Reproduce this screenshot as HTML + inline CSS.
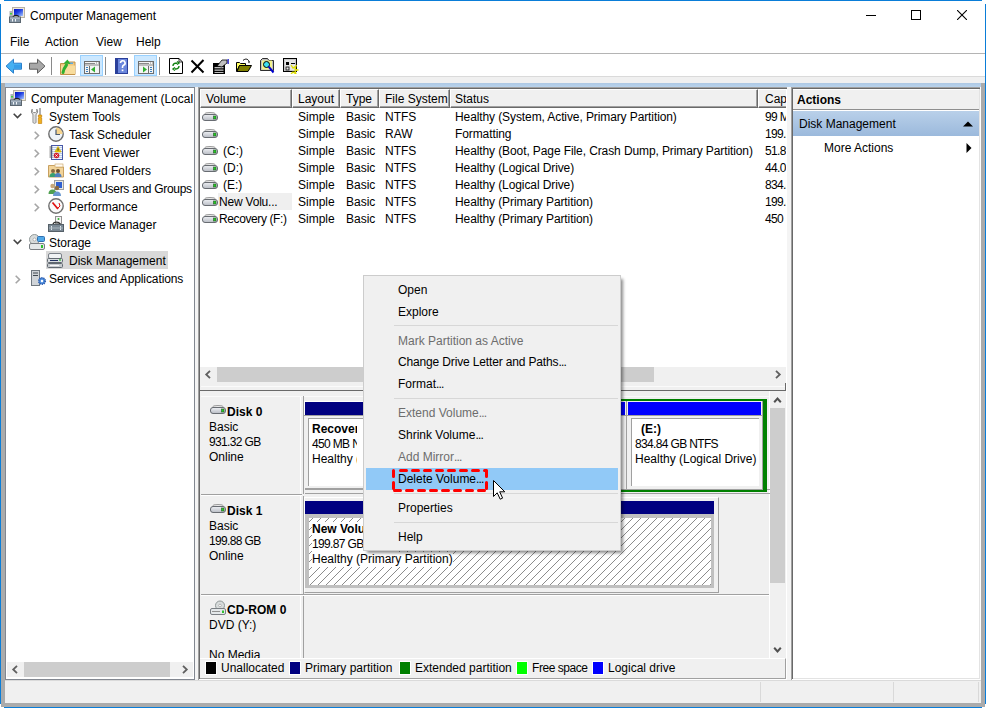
<!DOCTYPE html>
<html><head><meta charset="utf-8">
<style>
*{box-sizing:border-box;margin:0;padding:0}
html,body{width:986px;height:708px;overflow:hidden;background:#fff}
body{position:relative;font-family:"Liberation Sans",sans-serif;font-size:12px;color:#000}
.a{position:absolute}
.t{position:absolute;white-space:nowrap;line-height:15px}
.b{font-weight:bold}
.g{color:#6d6d6d}
.el{letter-spacing:-0.8px}
.dg{letter-spacing:-0.65px}
.hd{position:absolute;top:0;height:19px;background:#f0f0f0;border-top:1px solid #fff;border-left:1px solid #fff;box-shadow:inset -1px -1px 0 #a0a0a0;border-right:1px solid #696969;border-bottom:1px solid #696969}
.col{position:absolute;top:1px;white-space:nowrap;line-height:17px}
.dr{position:absolute;width:16px;height:10px}
.lg{position:absolute;top:661px;width:12px;height:14px;border:1px solid #fff}

</style></head><body>
<svg width="0" height="0" style="position:absolute"><defs><linearGradient id="dg" x1="0" y1="0" x2="0" y2="1"><stop offset="0" stop-color="#eef0f4"/><stop offset="1" stop-color="#b8bcc4"/></linearGradient></defs></svg>
<!-- window blue border -->
<div class="a" style="left:4px;top:0;width:978px;height:1px;background:#0a7dd8"></div>
<div class="a" style="left:0;top:4px;width:1px;height:700px;background:#0a7dd8"></div>
<div class="a" style="left:985px;top:4px;width:1px;height:700px;background:#0a7dd8"></div>
<div class="a" style="left:4px;top:707px;width:978px;height:1px;background:#0a7dd8"></div>

<!-- title icon -->
<svg class="a" style="left:9px;top:7px" width="16" height="16" viewBox="0 0 16 16"><defs><linearGradient id="scr" x1="0" y1="0" x2="1" y2="1"><stop offset="0" stop-color="#0010c0"/><stop offset=".45" stop-color="#2040e0"/><stop offset="1" stop-color="#a8c8ff"/></linearGradient></defs><rect x="3.5" y=".5" width="12" height="10" fill="#ece8dc" stroke="#b8b2a4"/><rect x="5" y="2" width="9" height="7" fill="url(#scr)"/><rect x=".5" y="4" width="3" height="6" fill="#b0b4b8"/><rect x="1" y="6" width="2" height="1.5" fill="#40d040"/><path d="M4 10c1-2.2 5-2.2 6 0" stroke="#202020" stroke-width="1.4" fill="none"/><rect x=".5" y="10" width="11" height="5.5" fill="#8494a4" stroke="#5a6670"/><rect x="1" y="10.5" width="10" height="1.2" fill="#b8c4d0"/><rect x="3" y="12" width="1" height="2.5" fill="#f0f4f8"/><rect x="6" y="12" width="1" height="2.5" fill="#f0f4f8"/></svg>
<!-- window buttons -->
<div class="a" style="left:866px;top:15px;width:10px;height:1px;background:#000"></div>
<div class="a" style="left:911px;top:10px;width:10px;height:10px;border:1px solid #000"></div>
<svg class="a" style="left:957px;top:10px" width="10" height="10" viewBox="0 0 10 10"><path d="M0 0L10 10M10 0L0 10" stroke="#000" stroke-width="1.1"/></svg>
<!-- title -->
<div class="t" style="left:30px;top:9px">Computer Management</div>
<!-- menu -->
<div class="t" style="left:10px;top:35px">File</div>
<div class="t" style="left:45px;top:35px">Action</div>
<div class="t" style="left:96px;top:35px">View</div>
<div class="t" style="left:136px;top:35px">Help</div>
<div class="a" style="left:1px;top:53px;width:984px;height:1px;background:#b4b4b4"></div>
<div class="a" style="left:1px;top:76px;width:984px;height:1px;background:#dadada"></div>
<div class="a" style="left:1px;top:77px;width:984px;height:6px;background:#f0f0f0"></div>

<!-- toolbar -->
<svg class="a" style="left:5px;top:58px" width="18" height="17" viewBox="0 0 18 17"><path d="M1 8.2L8.5 1.2V5.2H16.5V11.2H8.5V15.2z" fill="#45b0f2" stroke="#2a7fcc" stroke-width="1" stroke-linejoin="round"/><path d="M9 7h7v3H9z" fill="#2a8ae0" opacity=".5"/></svg>
<svg class="a" style="left:28px;top:58px" width="18" height="17" viewBox="0 0 18 17"><path d="M17 8.2L9.5 1.2V5.2H1.5V11.2H9.5V15.2z" fill="#a8a8a8" stroke="#5e5e5e" stroke-width="1" stroke-linejoin="round"/></svg>
<div class="a" style="left:51px;top:57px;width:1px;height:18px;background:#8a8a8a"></div>
<svg class="a" style="left:60px;top:59px" width="16" height="16" viewBox="0 0 16 16"><path d="M.5 4.5h6l1.5-1.5h7v12.5H.5z" fill="#efc77e" stroke="#c49248"/><rect x="1" y="6.5" width="14" height="8.5" fill="#f8dc9c"/><rect x="9" y="3.5" width="4" height="1.5" fill="#5aa8e8"/><path d="M3 13.5C3.5 10 5 8 6.5 6" stroke="#2fb02f" stroke-width="3" fill="none" stroke-linecap="round"/><path d="M3.5 4.5L7.5 .5 10.5 5z" fill="#2fb02f"/></svg>
<div class="a" style="left:80px;top:55px;width:23px;height:21px;background:#cce8ff;border:1px solid #99d1ff"></div>
<svg class="a" style="left:84px;top:61px" width="16" height="13" viewBox="0 0 16 13"><rect x=".5" y=".5" width="15" height="12" fill="#f4f4f4" stroke="#6e6e6e"/><path d="M1 2.5h10M1 4h14" stroke="#8a8a8a"/><rect x="12" y="1.5" width="1" height="1" fill="#8a8a8a"/><rect x="14" y="1.5" width="1" height="1" fill="#8a8a8a"/><path d="M5.5 5v7" stroke="#6e6e6e"/><path d="M2 6.5h2M2 8.5h2M2 10.5h2" stroke="#3a80c0"/><path d="M11 5.5v6l-4-3z" fill="#30b030"/></svg>
<div class="a" style="left:105px;top:57px;width:1px;height:18px;background:#8a8a8a"></div>
<svg class="a" style="left:115px;top:58px" width="13" height="16" viewBox="0 0 13 16"><rect x="0" y="0" width="13" height="16" fill="#2a3f9a"/><rect x="3" y="1" width="9" height="14" fill="#6a86dc"/><path d="M5.5 5a2.3 2.3 0 1 1 3 2.2c-.8.4-1 1-1 2v.8" stroke="#fff" stroke-width="1.6" fill="none"/><rect x="6.7" y="11.5" width="1.7" height="1.7" fill="#fff"/></svg>
<div class="a" style="left:134px;top:55px;width:23px;height:21px;background:#cce8ff;border:1px solid #99d1ff"></div>
<svg class="a" style="left:138px;top:61px" width="16" height="13" viewBox="0 0 16 13"><rect x=".5" y=".5" width="15" height="12" fill="#f4f4f4" stroke="#6e6e6e"/><path d="M1 2.5h10M1 4h14" stroke="#8a8a8a"/><rect x="12" y="1.5" width="1" height="1" fill="#8a8a8a"/><rect x="14" y="1.5" width="1" height="1" fill="#8a8a8a"/><path d="M10.5 5v7" stroke="#6e6e6e"/><path d="M12 6.5h2M12 8.5h2M12 10.5h2" stroke="#3a80c0"/><path d="M5 5.5v6l4-3z" fill="#30b030"/></svg>
<div class="a" style="left:159px;top:57px;width:1px;height:18px;background:#8a8a8a"></div>
<svg class="a" style="left:169px;top:58px" width="14" height="16" viewBox="0 0 14 16"><path d="M.5.5h9.5l3.5 3.5v11.5H.5z" fill="#fff" stroke="#000"/><path d="M10 .5v3.5h3.5" fill="none" stroke="#000" stroke-width=".8"/><path d="M4 8c0-2 1-3 4-3M8 3.5l2 1.5-2 1.5M10 8c0 2-1 3-4 3M6 9.5l-2 1.5 2 1.5" stroke="#108010" stroke-width="1.4" fill="none"/></svg>
<svg class="a" style="left:190px;top:59px" width="15" height="15" viewBox="0 0 15 15"><path d="M1.5 1.5L13.5 13.5M13.5 1L1.5 13.5" stroke="#000" stroke-width="2"/></svg>
<svg class="a" style="left:213px;top:59px" width="16" height="15" viewBox="0 0 16 15"><rect x="0" y="4" width="12" height="11" fill="#000"/><rect x="1.5" y="8" width="9" height="1.3" fill="#c0c0c0"/><rect x="1.5" y="10.5" width="9" height="1.3" fill="#c0c0c0"/><rect x="1.5" y="13" width="9" height="1" fill="#c0c0c0"/><path d="M4 7l5-6h5v3l-5 4z" fill="#c0c0c0" stroke="#000" stroke-width=".8"/><rect x="14.5" y="0" width="1.2" height="5" fill="#0000c0"/></svg>
<svg class="a" style="left:236px;top:58px" width="17" height="15" viewBox="0 0 17 15"><path d="M.5 4.5h3l1 1h5v2h-6l-3 6z" fill="#ffff60" stroke="#000"/><path d="M3.5 7.5h12l-3.5 6h-11z" fill="#808000" stroke="#000"/><path d="M7 2.5c2-2 5-2 6 1" stroke="#000" fill="none"/><path d="M12 3.5h2l-1 2z" fill="#000"/></svg>
<svg class="a" style="left:260px;top:58px" width="15" height="16" viewBox="0 0 15 16"><path d="M.5 2.5l2-2h5l1.5 2h4.5v10h-13z" fill="#c0c0c0" stroke="#000" stroke-width=".8"/><rect x="2" y="2.5" width="10" height="9" fill="#ffff80" opacity=".8"/><circle cx="6.5" cy="6.5" r="3" fill="#40e0f0" stroke="#000"/><path d="M8.7 8.7L13.5 14.5" stroke="#0000d0" stroke-width="2"/></svg>
<svg class="a" style="left:283px;top:58px" width="16" height="16" viewBox="0 0 16 16"><rect x=".5" y=".5" width="13" height="13" fill="#c8c8c8" stroke="#000"/><rect x="2" y="2" width="10" height="10" fill="#fff" opacity=".5"/><rect x="3" y="4" width="3" height="3" fill="#000"/><rect x="8" y="5" width="4" height="1" fill="#000"/><rect x="3" y="9" width="3" height="3" fill="none" stroke="#000" stroke-width=".8"/><path d="M8 7l2 3 3-2-1 3 3 1-3 1 1 3-3-2-2 2" stroke="#e0e000" stroke-width="1.3" fill="none"/></svg>
<!-- frame -->
<div class="a" style="left:1px;top:83px;width:4px;height:624px;background:#ababab"></div>
<div class="a" style="left:981px;top:83px;width:4px;height:624px;background:#ababab"></div>
<div class="a" style="left:1px;top:703px;width:984px;height:4px;background:#ababab"></div>
<div class="a" style="left:5px;top:83px;width:976px;height:4px;background:linear-gradient(#adc8e4,#b9d3ec)"></div>

<!-- status bar -->
<div class="a" style="left:5px;top:680px;width:976px;height:23px;background:#f0f0f0;border-top:1px solid #dadada"></div>
<div class="a" style="left:760px;top:682px;width:1px;height:20px;background:#d9d9d9"></div>
<div class="a" style="left:893px;top:682px;width:1px;height:20px;background:#d9d9d9"></div>
<div class="a" style="left:978px;top:682px;width:1px;height:20px;background:#d9d9d9"></div>

<!-- splitters -->
<div class="a" style="left:195px;top:87px;width:3px;height:593px;background:#f4f4f4"></div>
<div class="a" style="left:787px;top:87px;width:4px;height:593px;background:#f4f4f4"></div>

<!-- tree pane -->
<div id="tree" class="a" style="left:5px;top:87px;width:190px;height:593px;border:1px solid #828790;background:#fff"></div>
<div class="a" style="left:6px;top:88px;width:188px;height:591px;overflow:hidden">
<!-- row0 computer mgmt icon -->
<svg class="a" style="left:4px;top:2px" width="16" height="16" viewBox="0 0 16 16"><defs><linearGradient id="scr2" x1="0" y1="0" x2="1" y2="1"><stop offset="0" stop-color="#0010c0"/><stop offset=".45" stop-color="#2040e0"/><stop offset="1" stop-color="#a8c8ff"/></linearGradient></defs><rect x="3.5" y=".5" width="12" height="10" fill="#ece8dc" stroke="#b8b2a4"/><rect x="5" y="2" width="9" height="7" fill="url(#scr2)"/><rect x=".5" y="4" width="3" height="6" fill="#b0b4b8"/><rect x="1" y="6" width="2" height="1.5" fill="#40d040"/><path d="M4 10c1-2.2 5-2.2 6 0" stroke="#202020" stroke-width="1.4" fill="none"/><rect x=".5" y="10" width="11" height="5.5" fill="#8494a4" stroke="#5a6670"/><rect x="1" y="10.5" width="10" height="1.2" fill="#b8c4d0"/><rect x="3" y="12" width="1" height="2.5" fill="#f0f4f8"/><rect x="6" y="12" width="1" height="2.5" fill="#f0f4f8"/></svg>
<div class="t" style="left:25px;top:4px">Computer Management (Local</div>

<!-- row1 system tools -->
<svg class="a" style="left:7px;top:25px" width="9" height="6" viewBox="0 0 9 6"><path d="M0.7 0.7L4.5 4.5 8.3 0.7" stroke="#444" stroke-width="1.6" fill="none"/></svg>
<svg class="a" style="left:25px;top:20px" width="12" height="16" viewBox="0 0 12 16"><path d="M1.2 1.2C-.3 3 .3 5.6 2 6.2V14.3C2 15.6 5 15.6 5 14.3V6.2C6.7 5.6 7.3 3 5.8 1.2V3.6L4.6 4.6H2.4L1.2 3.6Z" fill="#ececec" stroke="#7a7a7a" stroke-width=".9"/><path d="M3 7v7" stroke="#c8c8c8"/><rect x="8.5" y="0" width="1" height="7" fill="#606060"/><path d="M7.3 7h3.4v2h-.6v1h.6v5.5h-3.4V10h.6V9h-.6z" fill="#f0b020" stroke="#c07800" stroke-width=".6"/></svg>
<div class="t" style="left:43px;top:22px">System Tools</div>

<!-- row2 task scheduler -->
<svg class="a" style="left:28px;top:43px" width="6" height="9" viewBox="0 0 6 9"><path d="M0.7 0.7L4.5 4.5 0.7 8.3" stroke="#a6a6a6" stroke-width="1.6" fill="none"/></svg>
<svg class="a" style="left:42px;top:38px" width="16" height="16" viewBox="0 0 16 16"><circle cx="8" cy="8" r="7.2" fill="#eef3f8" stroke="#6e6e6e" stroke-width="1.4"/><path d="M8 1.5A6.5 6.5 0 0 1 14.5 8H8z" fill="#f6d48e"/><path d="M8 3.5V8.5H12" stroke="#4a5a70" stroke-width="1.2" fill="none"/></svg>
<div class="t" style="left:63px;top:40px">Task Scheduler</div>

<!-- row3 event viewer -->
<svg class="a" style="left:28px;top:61px" width="6" height="9" viewBox="0 0 6 9"><path d="M0.7 0.7L4.5 4.5 0.7 8.3" stroke="#a6a6a6" stroke-width="1.6" fill="none"/></svg>
<svg class="a" style="left:42px;top:56px" width="16" height="16" viewBox="0 0 16 16"><rect x="3" y="1" width="12" height="15" fill="#4858a8"/><rect x="4" y="2" width="10" height="13" fill="#f4f8fc"/><path d="M4 3.5h10M4 5.5h10M4 7.5h10M4 9.5h10M4 11.5h10M4 13.5h10" stroke="#b8cce8" stroke-width="1"/><path d="M1.5 3h3M1.5 5h3M1.5 7h3M1.5 9h3M1.5 11h3M1.5 13h3" stroke="#5a5a5a" stroke-width="1"/><path d="M10 2.5l3.2 5.5h-6.4z" fill="#f2d000" stroke="#c8a000" stroke-width=".6"/><rect x="9.6" y="4.3" width=".9" height="2.4" fill="#1a1a1a"/><circle cx="8.5" cy="11.5" r="2.8" fill="#d42030"/><path d="M7.4 10.4l2.2 2.2M9.6 10.4l-2.2 2.2" stroke="#fff" stroke-width=".9"/></svg>
<div class="t" style="left:63px;top:58px">Event Viewer</div>

<!-- row4 shared folders -->
<svg class="a" style="left:28px;top:79px" width="6" height="9" viewBox="0 0 6 9"><path d="M0.7 0.7L4.5 4.5 0.7 8.3" stroke="#a6a6a6" stroke-width="1.6" fill="none"/></svg>
<svg class="a" style="left:42px;top:74px" width="16" height="16" viewBox="0 0 16 16"><path d="M0.5 3.5h6l1.5 1.5h7.5v10h-15z" fill="#f2d49a" stroke="#c8a060"/><rect x="7" y="2" width="8" height="3" fill="#fffaf0" stroke="#c8a060" stroke-width=".6"/><circle cx="5" cy="9" r="2" fill="#8a6a40"/><path d="M1.5 15c0-3 1.5-4 3.5-4s3.5 1 3.5 4z" fill="#38a070"/><circle cx="10" cy="9" r="2" fill="#6a5030"/><path d="M6.5 15c0-3 1.5-4 3.5-4s3.5 1 3.5 4z" fill="#5080c0"/></svg>
<div class="t" style="left:63px;top:76px">Shared Folders</div>

<!-- row5 local users -->
<svg class="a" style="left:28px;top:97px" width="6" height="9" viewBox="0 0 6 9"><path d="M0.7 0.7L4.5 4.5 0.7 8.3" stroke="#a6a6a6" stroke-width="1.6" fill="none"/></svg>
<svg class="a" style="left:42px;top:92px" width="16" height="16" viewBox="0 0 16 16"><rect x="6.5" y="0.5" width="9" height="9" fill="#e8e8e0" stroke="#a0a0a0"/><rect x="8" y="2" width="6" height="6" fill="#3060d0"/><circle cx="4.5" cy="6" r="2.2" fill="#c8a878"/><path d="M0.5 14c0-3 1.5-4.5 4-4.5s4 1.5 4 4.5z" fill="#50a050"/><circle cx="9" cy="8" r="2.2" fill="#8a6a40"/><path d="M5 16c0-3 1.5-4.5 4-4.5s4 1.5 4 4.5z" fill="#6a98d0"/></svg>
<div class="t" style="left:63px;top:94px;letter-spacing:-0.3px">Local Users and Groups</div>

<!-- row6 performance -->
<svg class="a" style="left:28px;top:115px" width="6" height="9" viewBox="0 0 6 9"><path d="M0.7 0.7L4.5 4.5 0.7 8.3" stroke="#a6a6a6" stroke-width="1.6" fill="none"/></svg>
<svg class="a" style="left:42px;top:110px" width="16" height="16" viewBox="0 0 16 16"><circle cx="8" cy="8" r="7.2" fill="#fafafa" stroke="#707070" stroke-width="1.4"/><path d="M4.5 4.5L10 11" stroke="#e01010" stroke-width="1.8"/><path d="M11 5l1 3-2 2" stroke="#e01010" stroke-width="1" fill="none"/></svg>
<div class="t" style="left:63px;top:112px">Performance</div>

<!-- row7 device manager -->
<svg class="a" style="left:42px;top:128px" width="16" height="16" viewBox="0 0 16 16"><rect x="7.5" y="0.5" width="6" height="7" fill="#f4f4f4" stroke="#909090"/><circle cx="10.5" cy="3" r="1" fill="#30b030"/><path d="M5 8c1-2.5 6-2.5 7 0" stroke="#303030" stroke-width="1.4" fill="none"/><rect x="0.5" y="8.5" width="15" height="7" fill="#7a8894" stroke="#556068"/><rect x="3" y="10" width="1" height="4" fill="#e0e8ee"/><rect x="12" y="10" width="1" height="4" fill="#e0e8ee"/><rect x="1" y="11.5" width="14" height="1" fill="#a8b4bc"/></svg>
<div class="t" style="left:63px;top:130px">Device Manager</div>

<!-- row8 storage -->
<svg class="a" style="left:7px;top:151px" width="9" height="6" viewBox="0 0 9 6"><path d="M0.7 0.7L4.5 4.5 8.3 0.7" stroke="#444" stroke-width="1.6" fill="none"/></svg>
<svg class="a" style="left:23px;top:146px" width="16" height="16" viewBox="0 0 16 16"><circle cx="5.5" cy="5.5" r="5" fill="#d8dcdc" stroke="#909898"/><circle cx="5.5" cy="5.5" r="1.5" fill="#fff" stroke="#909090" stroke-width=".6"/><rect x="8.5" y="2.5" width="7" height="5" rx="1" fill="#50a8e8" stroke="#3070b0"/><rect x="0.5" y="9.5" width="15" height="6" rx="1.5" fill="#e4e8ea" stroke="#7a7f84"/><rect x="12" y="11" width="2" height="3" fill="#30c030"/></svg>
<div class="t" style="left:43px;top:148px">Storage</div>

<!-- row9 disk management (selected) -->
<div class="a" style="left:40px;top:163px;width:122px;height:18px;background:#d9d9d9"></div>
<svg class="a" style="left:41px;top:164px" width="16" height="16" viewBox="0 0 16 16"><rect x="1.5" y="1.5" width="13" height="5" rx="1.5" fill="#f0f2f4" stroke="#7a8088"/><rect x="0.5" y="6.5" width="15" height="4" rx="1" fill="#d8dce0" stroke="#606870"/><rect x="3" y="8" width="8" height="1" fill="#203060"/><circle cx="13" cy="8" r=".9" fill="#30c030"/><rect x="0.5" y="11.5" width="15" height="4" rx="1" fill="#c8ccd0" stroke="#606870"/><rect x="3" y="13" width="9" height="1" fill="#f8f8f8"/></svg>
<div class="t" style="left:63px;top:166px">Disk Management</div>

<!-- row10 services -->
<svg class="a" style="left:9px;top:187px" width="6" height="9" viewBox="0 0 6 9"><path d="M0.7 0.7L4.5 4.5 0.7 8.3" stroke="#a6a6a6" stroke-width="1.6" fill="none"/></svg>
<svg class="a" style="left:25px;top:182px" width="16" height="16" viewBox="0 0 16 16"><rect x="0.5" y="0.5" width="8" height="15" fill="#d0d4d8" stroke="#707880"/><rect x="2" y="2.5" width="5" height="1" fill="#404850"/><rect x="2" y="5" width="5" height="1" fill="#404850"/><circle cx="11" cy="11" r="3.2" fill="#5090e0" stroke="#3060b0" stroke-dasharray="1.2 .8" stroke-width="1.8"/><circle cx="11" cy="11" r="1.2" fill="#fff"/></svg>
<div class="t" style="left:43px;top:184px;letter-spacing:-0.1px">Services and Applications</div>

<!-- tree scrollbar -->
<div class="a" style="left:1px;top:574px;width:186px;height:15px;background:#f0f0f0"></div>
<div class="a" style="left:18px;top:574px;width:146px;height:15px;background:#cdcdcd"></div>
<svg class="a" style="left:5px;top:577px" width="8" height="9" viewBox="0 0 8 9"><path d="M6 0.8L2.2 4.5 6 8.2" stroke="#606060" stroke-width="1.8" fill="none"/></svg>
<svg class="a" style="left:175px;top:577px" width="8" height="9" viewBox="0 0 8 9"><path d="M2 0.8L5.8 4.5 2 8.2" stroke="#606060" stroke-width="1.8" fill="none"/></svg>
</div>


<!-- center pane -->
<!-- center pane borders -->
<div class="a" style="left:198px;top:87px;width:589px;height:1px;background:#a0a0a0"></div>
<div class="a" style="left:198px;top:87px;width:1px;height:593px;background:#a0a0a0"></div>
<div class="a" style="left:199px;top:88px;width:588px;height:1px;background:#696969"></div>
<div class="a" style="left:199px;top:88px;width:1px;height:591px;background:#696969"></div>
<div class="a" style="left:200px;top:108px;width:586px;height:259px;background:#fff"></div>

<!-- header -->
<div class="a" style="left:200px;top:89px;width:586px;height:19px;overflow:hidden">
 <div class="hd" style="left:0;width:92px"></div>
 <div class="hd" style="left:92px;width:48px"></div>
 <div class="hd" style="left:140px;width:39px"></div>
 <div class="hd" style="left:179px;width:71px"></div>
 <div class="hd" style="left:250px;width:308px"></div>
 <div class="hd" style="left:558px;width:40px"></div>
 <div class="t" style="left:6px;top:3px">Volume</div>
 <div class="t" style="left:98px;top:3px">Layout</div>
 <div class="t" style="left:146px;top:3px">Type</div>
 <div class="t" style="left:185px;top:3px">File System</div>
 <div class="t" style="left:255px;top:3px">Status</div>
 <div class="t" style="left:565px;top:3px">Cap</div>
</div>

<!-- rows -->
<div class="a" style="left:200px;top:108px;width:586px;height:259px;overflow:hidden">
 <div class="a" style="left:18px;top:85px;width:74px;height:17px;background:#efefef"></div>
 <svg class="dr" style="left:2px;top:4px"><path d="M2.5 3.5V2Q2.5 .5 8 .5T13.5 2V3.5" fill="#ececec" stroke="#9a9a9a"/><rect x=".5" y="2.5" width="15" height="6" rx="2.5" fill="url(#dg)" stroke="#686c72"/><rect x="11.5" y="4" width="2.5" height="3" fill="#22cc22" stroke="#2a5a2a" stroke-width=".6"/></svg>
 <svg class="dr" style="left:2px;top:21px"><path d="M2.5 3.5V2Q2.5 .5 8 .5T13.5 2V3.5" fill="#ececec" stroke="#9a9a9a"/><rect x=".5" y="2.5" width="15" height="6" rx="2.5" fill="url(#dg)" stroke="#686c72"/><rect x="11.5" y="4" width="2.5" height="3" fill="#22cc22" stroke="#2a5a2a" stroke-width=".6"/></svg>
 <svg class="dr" style="left:2px;top:38px"><path d="M2.5 3.5V2Q2.5 .5 8 .5T13.5 2V3.5" fill="#ececec" stroke="#9a9a9a"/><rect x=".5" y="2.5" width="15" height="6" rx="2.5" fill="url(#dg)" stroke="#686c72"/><rect x="11.5" y="4" width="2.5" height="3" fill="#22cc22" stroke="#2a5a2a" stroke-width=".6"/></svg>
 <svg class="dr" style="left:2px;top:55px"><path d="M2.5 3.5V2Q2.5 .5 8 .5T13.5 2V3.5" fill="#ececec" stroke="#9a9a9a"/><rect x=".5" y="2.5" width="15" height="6" rx="2.5" fill="url(#dg)" stroke="#686c72"/><rect x="11.5" y="4" width="2.5" height="3" fill="#22cc22" stroke="#2a5a2a" stroke-width=".6"/></svg>
 <svg class="dr" style="left:2px;top:72px"><path d="M2.5 3.5V2Q2.5 .5 8 .5T13.5 2V3.5" fill="#ececec" stroke="#9a9a9a"/><rect x=".5" y="2.5" width="15" height="6" rx="2.5" fill="url(#dg)" stroke="#686c72"/><rect x="11.5" y="4" width="2.5" height="3" fill="#22cc22" stroke="#2a5a2a" stroke-width=".6"/></svg>
 <svg class="dr" style="left:2px;top:89px"><path d="M2.5 3.5V2Q2.5 .5 8 .5T13.5 2V3.5" fill="#ececec" stroke="#9a9a9a"/><rect x=".5" y="2.5" width="15" height="6" rx="2.5" fill="url(#dg)" stroke="#686c72"/><rect x="11.5" y="4" width="2.5" height="3" fill="#22cc22" stroke="#2a5a2a" stroke-width=".6"/></svg>
 <svg class="dr" style="left:2px;top:106px"><path d="M2.5 3.5V2Q2.5 .5 8 .5T13.5 2V3.5" fill="#ececec" stroke="#9a9a9a"/><rect x=".5" y="2.5" width="15" height="6" rx="2.5" fill="url(#dg)" stroke="#686c72"/><rect x="11.5" y="4" width="2.5" height="3" fill="#22cc22" stroke="#2a5a2a" stroke-width=".6"/></svg>
 <div class="t" style="left:23px;top:36px">(C:)</div>
 <div class="t" style="left:23px;top:53px">(D:)</div>
 <div class="t" style="left:23px;top:70px">(E:)</div>
 <div class="t" style="left:19px;top:87px;letter-spacing:-0.2px">New Volu...</div>
 <div class="t" style="left:19px;top:104px;letter-spacing:-0.4px">Recovery (F:)</div>
 <div class="col" style="left:98px">Simple<br>Simple<br>Simple<br>Simple<br>Simple<br>Simple<br>Simple</div>
 <div class="col" style="left:146px">Basic<br>Basic<br>Basic<br>Basic<br>Basic<br>Basic<br>Basic</div>
 <div class="col" style="left:185px">NTFS<br>RAW<br>NTFS<br>NTFS<br>NTFS<br>NTFS<br>NTFS</div>
 <div class="col" style="left:255px;letter-spacing:-0.1px">Healthy (System, Active, Primary Partition)<br>Formatting<br>Healthy (Boot, Page File, Crash Dump, Primary Partition)<br>Healthy (Logical Drive)<br>Healthy (Logical Drive)<br>Healthy (Primary Partition)<br>Healthy (Primary Partition)</div>
 <div class="col dg" style="left:565px">99 MB<br>199.87 GB<br>51.80 GB<br>44.00 GB<br>834.84 GB<br>199.87 GB<br>450 MB</div>
</div>

<!-- list h scrollbar -->
<div class="a" style="left:200px;top:367px;width:586px;height:15px;background:#f0f0f0"></div>
<div class="a" style="left:217px;top:367px;width:437px;height:15px;background:#cdcdcd"></div>
<svg class="a" style="left:204px;top:370px" width="8" height="9" viewBox="0 0 8 9"><path d="M6 0.8L2.2 4.5 6 8.2" stroke="#606060" stroke-width="1.8" fill="none"/></svg>
<svg class="a" style="left:774px;top:370px" width="8" height="9" viewBox="0 0 8 9"><path d="M2 0.8L5.8 4.5 2 8.2" stroke="#606060" stroke-width="1.8" fill="none"/></svg>
<div class="a" style="left:200px;top:382px;width:586px;height:8px;background:#f0f0f0"></div>
<div class="a" style="left:201px;top:386px;width:585px;height:1px;background:#fafafa"></div>
<div class="a" style="left:200px;top:390px;width:586px;height:1px;background:#696969"></div>
<div class="a" style="left:785px;top:383px;width:1px;height:8px;background:#696969"></div>

<!-- disk view -->
<div class="a" style="left:200px;top:391px;width:586px;height:267px;background:#f0f0f0;overflow:hidden">
 <!-- v scrollbar -->
 <div class="a" style="left:569px;top:0;width:1px;height:267px;background:#fff"></div>
 <div class="a" style="left:570px;top:17px;width:15px;height:175px;background:#cdcdcd"></div>
 <svg class="a" style="left:573px;top:5px" width="9" height="8" viewBox="0 0 9 8"><path d="M1.2 6.2L4.5 2.6 7.8 6.2" stroke="#505050" stroke-width="2" fill="none"/></svg>
 <svg class="a" style="left:573px;top:255px" width="9" height="8" viewBox="0 0 9 8"><path d="M1.2 1.8L4.5 5.4 7.8 1.8" stroke="#505050" stroke-width="2" fill="none"/></svg>

 <!-- disk 0 row -->
 <div class="a" style="left:1px;top:5px;width:568px;height:1px;background:#fafafa"></div>
 <div class="a" style="left:103px;top:5px;width:1px;height:98px;background:#a0a0a0"></div>
 <div class="a" style="left:100px;top:6px;width:1px;height:97px;background:#fff"></div>
 <div class="a" style="left:104px;top:10px;width:60px;height:1px;background:#fff"></div>
 <div class="a" style="left:104px;top:10px;width:1px;height:14px;background:#fff"></div>
 <div class="a" style="left:104px;top:24px;width:60px;height:1px;background:#a0a0a0"></div>
 <svg class="a" style="left:10px;top:14px" width="16" height="10" viewBox="0 0 16 10"><path d="M2.5 3.5V2Q2.5 .5 8 .5T13.5 2V3.5" fill="#ececec" stroke="#9a9a9a"/><rect x=".5" y="2.5" width="15" height="6" rx="2.5" fill="url(#dg)" stroke="#686c72"/><rect x="11.5" y="4" width="2.5" height="3" fill="#22cc22" stroke="#2a5a2a" stroke-width=".6"/></svg>
 <div class="t b" style="left:27px;top:14px">Disk 0</div>
 <div class="t" style="left:9px;top:29px">Basic</div>
 <div class="t dg" style="left:9px;top:44px">931.32 GB</div>
 <div class="t" style="left:9px;top:59px">Online</div>
 <div class="a" style="left:1px;top:103px;width:101px;height:1px;background:#a0a0a0"></div>
 <div class="a" style="left:1px;top:104px;width:101px;height:1px;background:#fff"></div>

 <!-- recovery partition -->
 <div class="a" style="left:105px;top:11px;width:65px;height:13px;background:#000080"></div>
 <div class="a" style="left:105px;top:25px;width:70px;height:73px;background:#f0f0f0;border-bottom:1px solid #a0a0a0"></div>
 <div class="a" style="left:108px;top:27px;width:60px;height:68px;background:#fff;border-top:1px solid #a0a0a0;border-left:1px solid #a0a0a0;overflow:hidden">
  <div class="a" style="left:0;top:0;width:48px;height:66px;overflow:hidden">
  <div class="t b" style="left:3px;top:3px">Recovery</div>
  <div class="t dg" style="left:3px;top:18px">450 MB NTFS</div>
  <div class="t" style="left:3px;top:33px">Healthy (Primary Partition)</div>
  </div>
 </div>
 <div class="a" style="left:105px;top:98px;width:465px;height:1px;background:#a0a0a0"></div>
 <div class="a" style="left:105px;top:102px;width:465px;height:1px;background:#a0a0a0"></div>

 <!-- extended partition -->
 <div class="a" style="left:400px;top:8px;width:167px;height:93px;border:3px solid #008000;border-top-width:2px;border-bottom-width:2px;border-right-width:4px"></div>
 <div class="a" style="left:420px;top:11px;width:5px;height:13px;background:#0000ff"></div>
 <div class="a" style="left:426px;top:10px;width:1px;height:88px;background:#a0a0a0"></div>
 <div class="a" style="left:428px;top:11px;width:133px;height:13px;background:#0000ff"></div>
 <div class="a" style="left:562px;top:10px;width:1px;height:89px;background:#a0a0a0"></div>
 <div class="a" style="left:403px;top:24px;width:159px;height:1px;background:#a0a0a0"></div>
 <div class="a" style="left:403px;top:98px;width:159px;height:1px;background:#a0a0a0"></div>
 <div class="a" style="left:431px;top:27px;width:128px;height:68px;background:#fff;border-top:1px solid #a0a0a0;border-left:1px solid #a0a0a0;overflow:hidden">
  <div class="t b" style="left:9px;top:3px">(E:)</div>
  <div class="t dg" style="left:3px;top:18px">834.84 GB NTFS</div>
  <div class="t" style="left:3px;top:33px">Healthy (Logical Drive)</div>
 </div>

 <!-- disk 1 row -->
 <svg class="a" style="left:10px;top:113px" width="16" height="10" viewBox="0 0 16 10"><path d="M2.5 3.5V2Q2.5 .5 8 .5T13.5 2V3.5" fill="#ececec" stroke="#9a9a9a"/><rect x=".5" y="2.5" width="15" height="6" rx="2.5" fill="url(#dg)" stroke="#686c72"/><rect x="11.5" y="4" width="2.5" height="3" fill="#22cc22" stroke="#2a5a2a" stroke-width=".6"/></svg>
 <div class="t b" style="left:27px;top:113px">Disk 1</div>
 <div class="t" style="left:9px;top:128px">Basic</div>
 <div class="t dg" style="left:9px;top:143px">199.88 GB</div>
 <div class="t" style="left:9px;top:158px">Online</div>
 <div class="a" style="left:103px;top:105px;width:1px;height:98px;background:#a0a0a0"></div>
 <div class="a" style="left:100px;top:105px;width:1px;height:98px;background:#fff"></div>
 <div class="a" style="left:105px;top:110px;width:409px;height:13px;background:#000080"></div>
 <div class="a" style="left:105px;top:123px;width:409px;height:74px;background:#c0c0c0"></div>
 <svg class="a" style="left:109px;top:127px" width="402" height="67"><defs><pattern id="hp" x="4" width="8" height="8" patternUnits="userSpaceOnUse"><path d="M-1 9L9 -1M-1 1L1 -1M7 9L9 7" stroke="#8c8c8c" stroke-width="1"/></pattern></defs><rect width="402" height="67" fill="#fff"/><rect width="402" height="67" fill="url(#hp)"/></svg>
 <div class="a" style="left:109px;top:127px;width:402px;height:67px;overflow:hidden">
  <div class="t b" style="left:3px;top:4px;background:#fff;line-height:15px">New Volume</div>
  <div class="t dg" style="left:3px;top:19px;background:#fff">199.87 GB NTFS</div>
  <div class="t" style="left:3px;top:34px;background:#fff">Healthy (Primary Partition)</div>
 </div>
 <div class="a" style="left:104px;top:106px;width:415px;height:96px;border:1px solid #a0a0a0;border-top-color:#fff;border-left-color:#fff"></div>
 <div class="a" style="left:1px;top:203px;width:568px;height:1px;background:#a0a0a0"></div>
 <div class="a" style="left:1px;top:204px;width:568px;height:1px;background:#fff"></div>

 <!-- cd-rom row -->
 <div class="a" style="left:103px;top:205px;width:1px;height:62px;background:#a0a0a0"></div>
 <div class="a" style="left:100px;top:205px;width:1px;height:62px;background:#fff"></div>
 <svg class="a" style="left:10px;top:209px" width="16" height="16" viewBox="0 0 16 16"><circle cx="10" cy="5.5" r="4.5" fill="#d8dcdc" stroke="#909898"/><circle cx="10" cy="5.5" r="1.3" fill="#fff" stroke="#909090" stroke-width=".6"/><rect x="0.5" y="8.5" width="15" height="6" rx="1.5" fill="#e4e8ea" stroke="#7a7f84"/><rect x="2" y="11" width="8" height="1" fill="#909090"/><rect x="12" y="10.5" width="2" height="2.5" fill="#30c030"/></svg>
 <div class="t b" style="left:27px;top:212px">CD-ROM 0</div>
 <div class="t" style="left:9px;top:227px">DVD (Y:)</div>
 <div class="t" style="left:9px;top:257px">No Media</div>
</div>

<!-- legend -->
<div class="a" style="left:200px;top:658px;width:586px;height:21px;background:#f0f0f0;border-top:1px solid #fff;border-bottom:1px solid #a0a0a0;border-right:1px solid #a0a0a0"></div>
<div class="lg" style="left:205px;background:#000"></div>
<div class="t" style="left:221px;top:661px">Unallocated</div>
<div class="lg" style="left:289px;background:#000080"></div>
<div class="t" style="left:305px;top:661px">Primary partition</div>
<div class="lg" style="left:399px;background:#008000"></div>
<div class="t" style="left:415px;top:661px">Extended partition</div>
<div class="lg" style="left:516px;background:#00ff00"></div>
<div class="t" style="left:532px;top:661px;letter-spacing:-0.45px">Free space</div>
<div class="lg" style="left:592px;background:#0000ff"></div>
<div class="t" style="left:608px;top:661px">Logical drive</div>


<!-- actions pane -->
<!-- actions pane -->
<div class="a" style="left:791px;top:87px;width:190px;height:1px;background:#a0a0a0"></div>
<div class="a" style="left:791px;top:87px;width:1px;height:593px;background:#a0a0a0"></div>
<div class="a" style="left:792px;top:88px;width:189px;height:1px;background:#696969"></div>
<div class="a" style="left:792px;top:88px;width:1px;height:591px;background:#696969"></div>
<div class="a" style="left:793px;top:89px;width:187px;height:590px;background:#fff"></div>
<div class="a" style="left:793px;top:89px;width:186px;height:20px;background:#f0f0f0;border-top:1px solid #fff"></div>
<div class="a" style="left:793px;top:109px;width:186px;height:1px;background:#8f8f8f"></div>
<div class="a" style="left:793px;top:111px;width:186px;height:25px;background:linear-gradient(#b9d0e9,#9bb9dc)"></div>
<div class="a" style="left:979px;top:89px;width:1px;height:590px;background:#e3e3e3"></div>
<div class="a" style="left:793px;top:678px;width:187px;height:1px;background:#e3e3e3"></div>
<div class="a" style="left:980px;top:87px;width:1px;height:593px;background:#fff"></div>
<div class="t b" style="left:797px;top:93px">Actions</div>
<div class="t" style="left:799px;top:117px">Disk Management</div>
<svg class="a" style="left:963px;top:121px" width="10" height="6" viewBox="0 0 10 6"><path d="M0 5.5L5 .5 10 5.5z" fill="#000"/></svg>
<div class="t" style="left:824px;top:141px">More Actions</div>
<svg class="a" style="left:966px;top:143px" width="6" height="10" viewBox="0 0 6 10"><path d="M.5 0L5.5 5 .5 10z" fill="#000"/></svg>


<!-- context menu -->
<div class="a" style="left:363px;top:275px;width:258px;height:276px;background:#f0f0f0;border:1px solid #cccccc;box-shadow:3px 3px 3px -1px rgba(0,0,0,0.45)"></div>
<div class="t" style="left:398px;top:283px">Open</div>
<div class="t" style="left:398px;top:305px">Explore</div>
<div class="a" style="left:394px;top:325px;width:224px;height:1px;background:#d7d7d7"></div>
<div class="t g" style="left:398px;top:334px">Mark Partition as Active</div>
<div class="t" style="left:398px;top:355px;letter-spacing:-0.15px">Change Drive Letter and Paths<span class="el">...</span></div>
<div class="t" style="left:398px;top:377px">Format<span class="el">...</span></div>
<div class="a" style="left:394px;top:398px;width:224px;height:1px;background:#d7d7d7"></div>
<div class="t g" style="left:398px;top:406px">Extend Volume<span class="el">...</span></div>
<div class="t" style="left:398px;top:428px">Shrink Volume<span class="el">...</span></div>
<div class="t g" style="left:398px;top:450px">Add Mirror<span class="el">...</span></div>
<div class="a" style="left:366px;top:468px;width:252px;height:22px;background:#91c9f7"></div>
<div class="t" style="left:398px;top:472px">Delete Volume<span class="el">...</span></div>
<div class="a" style="left:394px;top:493px;width:224px;height:1px;background:#d7d7d7"></div>
<div class="t" style="left:398px;top:501px">Properties</div>
<div class="a" style="left:394px;top:522px;width:224px;height:1px;background:#d7d7d7"></div>
<div class="t" style="left:398px;top:530px">Help</div>
<svg class="a" style="left:388px;top:464px" width="104" height="32" viewBox="0 0 104 32" fill="none" stroke="#ff0000" stroke-width="3" stroke-linecap="round" stroke-dasharray="6 6"><path d="M12.5 6.5H98"/><path d="M5.5 6.5V26"/><path d="M6.5 26.5H98"/><path d="M98.5 6.5V26"/></svg>
<!-- cursor -->
<svg class="a" style="left:492px;top:479px" width="16" height="22" viewBox="0 0 16 22"><path d="M1.5 1.5V17.5L5.2 13.8 8.2 20.2 10.6 19.1 7.7 12.8H12.8z" fill="#fff" stroke="#000" stroke-width="1" stroke-linejoin="round"/></svg>
</body></html>
